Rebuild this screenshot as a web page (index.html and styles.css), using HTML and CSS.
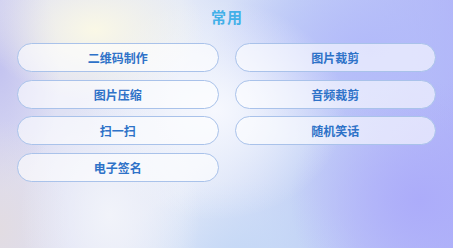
FILE: index.html
```html
<!DOCTYPE html>
<html>
    <head>
        <meta charset="utf-8">
        <title>常用</title>
        <link rel="stylesheet" href="styles.css">
    </head>
    <body>
        <!-- tool menu -->
        <div class="page-container">
            <div class="section-title">常用</div>
            <div class="tool-grid">
                <button class="tool-btn">二维码制作</button>
                <button class="tool-btn">图片裁剪</button>
                <button class="tool-btn">图片压缩</button>
                <button class="tool-btn">音频裁剪</button>
                <button class="tool-btn">扫一扫</button>
                <button class="tool-btn">随机笑话</button>
                <button class="tool-btn">电子签名</button>
            </div>
        </div>
    </body>
</html>
```

FILE: styles.css
```css
html, body {
    margin: 0;
    padding: 0;
    height: 100%;
}

body {
    font-family: "Noto Sans CJK SC", "Noto Sans", sans-serif;
    background-color: #d4dcf6;
    background-image:
        radial-gradient(ellipse 110px 70px at 95px 30px, rgba(250, 248, 230, 1), rgba(250, 248, 230, 0) 100%),
        radial-gradient(ellipse 90px 120px at 110px 215px, rgba(242, 244, 250, 0.95), rgba(242, 244, 250, 0) 100%),
        radial-gradient(ellipse 130px 110px at 215px 110px, rgba(246, 248, 254, 1), rgba(246, 248, 254, 0) 100%),
        radial-gradient(ellipse 130px 120px at 420px 200px, rgba(172, 172, 250, 1), rgba(172, 172, 250, 0) 100%),
        radial-gradient(ellipse 160px 100px at 370px 50px, rgba(178, 186, 250, 1), rgba(178, 186, 250, 0) 100%),
        radial-gradient(ellipse 120px 80px at 240px 260px, rgba(196, 216, 246, 1), rgba(196, 216, 246, 0) 100%),
        radial-gradient(ellipse 70px 110px at 0px 230px, rgba(226, 220, 226, 1), rgba(226, 220, 226, 0) 100%),
        radial-gradient(ellipse 60px 120px at 0px 70px, rgba(196, 196, 240, 1), rgba(196, 196, 240, 0) 100%),
        linear-gradient(90deg, #dcdcf2 0%, #e4eaf8 40%, #c6d4f6 65%, #b2b6f8 100%);
}

.page-container {
    display: flex;
    flex-direction: column;
    padding: 0 17px;
}

.section-title {
    height: 36px;
    line-height: 34px;
    text-align: center;
    font-size: 15px;
    font-weight: bold;
    color: #42b0e8;
    letter-spacing: 1px;
    padding-left: 1px;
}

.tool-grid {
    display: grid;
    grid-template-columns: 1fr 1fr;
    column-gap: 16px;
    row-gap: 7.5px;
    margin-top: 7px;
}

.tool-btn {
    height: 29px;
    border: 1px solid #a9c2ea;
    border-radius: 15px;
    background-color: rgba(255, 255, 255, 0.6);
    color: #2e72c8;
    font-family: "Noto Sans CJK SC", "Noto Sans", sans-serif;
    font-size: 12px;
    font-weight: bold;
    padding: 0;
}
```
